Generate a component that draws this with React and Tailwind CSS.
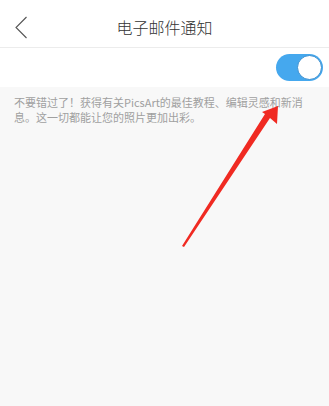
export default function App() {
  return (
    <div
      className="relative flex h-[406px] w-[329px] flex-col overflow-hidden bg-[#f8f8f8]"
      style={{ fontFamily: '"Noto Sans CJK SC", "Noto Sans", sans-serif' }}
    >
      <div className="relative flex h-[48px] items-center justify-center border-b border-[#ececec] bg-white">
        <svg className="absolute left-[14px] top-[16px]" width="14" height="23" viewBox="0 0 14 23" fill="none">
          <path d="M12.5 1 L2 11.5 L12.5 22" stroke="#555" strokeWidth="1.1" />
        </svg>
        <span className="mt-[7px] text-[16px] font-light text-[#333]">电子邮件通知</span>
      </div>
      <div className="flex h-[39px] items-center justify-end bg-white pr-[6px]">
        <div className="flex h-[27px] w-[47px] items-center justify-end rounded-full bg-[#45a8ee] p-[1px]">
          <div className="h-[25px] w-[25px] rounded-full border border-[#3a8fd0] bg-white" />
        </div>
      </div>
      <p className="pl-[14px] pr-[20px] pt-[8px] text-[11px] leading-[15px] text-[#a0a0a0]">
        不要错过了！获得有关PicsArt的最佳教程、编辑灵感和新消息。这一切都能让您的照片更加出彩。
      </p>
      <svg className="absolute left-0 top-0" width="329" height="406" viewBox="0 0 329 406">
        <polygon points="278,106 277,124 270,118 184,247 182,246 265,114 262,112" fill="#f02a22" />
      </svg>
    </div>
  )
}
